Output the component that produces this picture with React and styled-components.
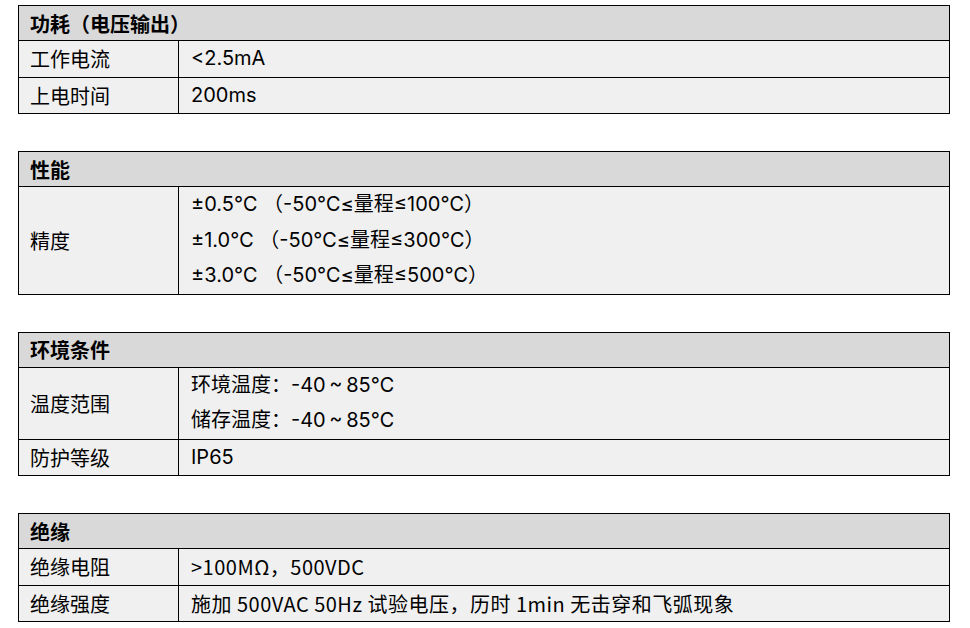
import React from 'react';
import styled, { createGlobalStyle } from 'styled-components';

const GlobalStyle = createGlobalStyle`
  body {
    margin: 0;
    background: #fff;
    font-family: "Noto Sans CJK SC", "Open Sans", sans-serif;
    color: #000;
  }
`

const sections = [
    {
        title: '功耗（电压输出）',
        rows: [
            { label: '工作电流', lines: ['<2.5mA'] },
            { label: '上电时间', lines: ['200ms'] }
        ]
    },
    {
        title: '性能',
        rows: [
            { label: '精度', lines: [
                '±0.5℃ （-50℃≤量程≤100℃）',
                '±1.0℃ （-50℃≤量程≤300℃）',
                '±3.0℃ （-50℃≤量程≤500℃）'
            ] }
        ]
    },
    {
        title: '环境条件',
        rows: [
            { label: '温度范围', lines: ['环境温度：-40\u2009~\u200985℃', '储存温度：-40\u2009~\u200985℃'] },
            { label: '防护等级', lines: ['IP65'] }
        ]
    },
    {
        title: '绝缘',
        narrow: true,
        rows: [
            { label: '绝缘电阻', lines: ['>100MΩ，500VDC'] },
            { label: '绝缘强度', lines: ['施加 500VAC 50Hz 试验电压，历时 1min 无击穿和飞弧现象'] }
        ]
    }
]

function App() {
    return <Page>
        <GlobalStyle />
        {sections.map(s => (
            <Table key={s.title}>
                <colgroup>
                    <col style={{ width: 160 }} />
                    <col />
                </colgroup>
                <tbody>
                    <tr><HeadCell colSpan={2}>{s.title}</HeadCell></tr>
                    {s.rows.map(r => (
                        <tr key={r.label}>
                            <LabelCell>{r.label}</LabelCell>
                            <ValueCell $narrow={s.narrow}>
                                {r.lines.map(l => <Line key={l}>{l}</Line>)}
                            </ValueCell>
                        </tr>
                    ))}
                </tbody>
            </Table>
        ))}
    </Page>
}

export default App

const Page = styled.div`
    padding: 5px 0 0 18px;
    display: flex;
    flex-direction: column;
    gap: 37px;
`

const Table = styled.table`
    width: 932px;
    border-collapse: collapse;
    table-layout: fixed;
    font-size: 20px;
`

const cell = `
    border: 1px solid #000;
    padding: 0 0 0 11px;
    height: 35px;
    box-sizing: border-box;
    text-align: left;
    vertical-align: middle;
    white-space: pre;
`

const HeadCell = styled.td`
    ${cell}
    background: #d9d9d9;
    font-weight: bold;
`

const LabelCell = styled.td`
    ${cell}
    background: #f0f0f0;
`

const ValueCell = styled.td`
    ${cell}
    background: #f0f0f0;
    padding-left: 12px;
    font-family: ${p => p.$narrow ? '"Noto Sans CJK SC", sans-serif' : 'Inter, "Noto Sans CJK SC", sans-serif'};
    letter-spacing: ${p => p.$narrow ? '0.5px' : '0'};
`

const Line = styled.div`
    line-height: 35.5px;
`
